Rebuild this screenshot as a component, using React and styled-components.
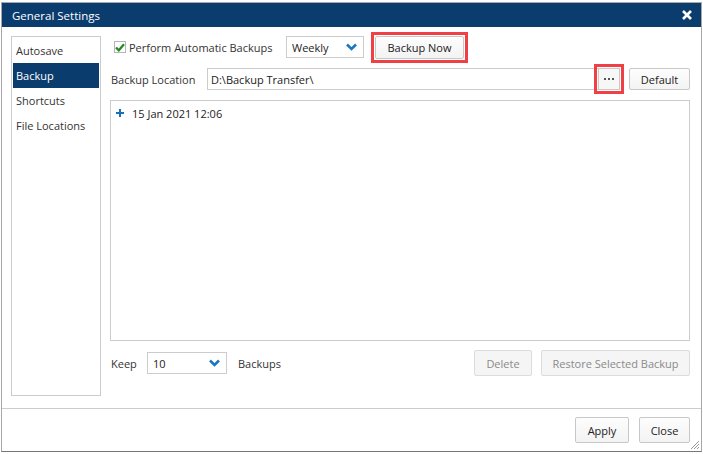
import React from "react";
import styled, { createGlobalStyle } from "styled-components";

const Global = createGlobalStyle`
  html, body { margin: 0; padding: 0; background: #fff; }
  body { font-family: "Open Sans", "Noto Sans", sans-serif; font-size: 11px; color: #333; }
  * { box-sizing: border-box; }
`;

const Win = styled.div`
  margin: 2px 0 0 1px;
  width: 701px;
  height: 450px;
  border: 1px solid #a8a8a8;
  border-bottom: 1px solid #777;
  display: flex;
  flex-direction: column;
  position: relative;
  background: #fff;
`;

const TitleBar = styled.div`
  height: 24px;
  background: #0b3c6e;
  color: #fff;
  display: flex;
  align-items: center;
  justify-content: space-between;
  padding: 0 9px 0 10px;
  font-size: 11.5px;
`;

const Body = styled.div`
  flex: 1;
  display: flex;
  gap: 9px;
  padding: 9px 11px 0 9px;
`;

const Sidebar = styled.div`
  width: 90px;
  height: 360px;
  border: 1px solid #ccc;
  padding: 1px;
  display: flex;
  flex-direction: column;
`;

const NavItem = styled.div`
  height: 25px;
  line-height: 25px;
  padding-left: 3px;
  font-size: 11px;
  white-space: nowrap;
  color: ${(p) => (p.$active ? "#fff" : "#333")};
  background: ${(p) => (p.$active ? "#0b3c6e" : "transparent")};
`;

const Main = styled.div`
  width: 580px;
  display: flex;
  flex-direction: column;
`;

const Row = styled.div`
  display: flex;
  align-items: center;
  height: ${(p) => p.$h || 22}px;
  margin-bottom: ${(p) => p.$mb || 0}px;
`;

const CheckBox = styled.span`
  width: 12px;
  height: 12px;
  flex: none;
  border: 1px solid #b5b5b5;
  background: #fff;
  margin-left: 4px;
  margin-right: 3px;
  display: inline-flex;
  align-items: center;
  justify-content: center;
`;

const Label = styled.span`
  font-size: 11px;
  color: #333;
  white-space: nowrap;
  flex: none;
  width: ${(p) => (p.$w ? p.$w + "px" : "auto")};
  margin-left: ${(p) => p.$ml || 0}px;
`;

const Select = styled.div`
  flex: none;
  width: ${(p) => p.$w}px;
  height: ${(p) => p.$h || 22}px;
  border: 1px solid #ccc;
  display: flex;
  align-items: center;
  justify-content: space-between;
  padding: 0 6px 0 5px;
  font-size: 11px;
  color: #222;
  background: #fff;
`;

const Highlight = styled.div`
  flex: none;
  display: flex;
  border: 3px solid #ef4046;
  padding: 1px;
  margin: -5px 0;
  margin-left: ${(p) => p.$ml || 0}px;
`;

const Button = styled.button`
  flex: none;
  height: ${(p) => p.$h || 24}px;
  width: ${(p) => p.$w}px;
  font-family: inherit;
  font-size: 11px;
  color: ${(p) => (p.disabled ? "#8a8a8a" : "#222")};
  background: ${(p) => (p.disabled ? "#f5f5f5" : "linear-gradient(#fdfdfd, #f3f3f3)")};
  border: 1px solid ${(p) => (p.disabled ? "#dcdcdc" : "#c8c8c8")};
  border-radius: 2px;
  padding: 0;
  margin-left: ${(p) => p.$ml || 0}px;
  display: inline-flex;
  align-items: center;
  justify-content: center;
`;

const PathInput = styled.div`
  flex: none;
  width: 413px;
  height: 22px;
  border: 1px solid #ccc;
  display: flex;
  align-items: stretch;
  font-size: 11px;
  color: #222;
`;

const PathText = styled.span`
  flex: 1;
  display: flex;
  align-items: center;
  padding-left: 3px;
`;

const DotsBtn = styled.button`
  width: 22px;
  margin: -1px -1px -1px 0;
  border: 1px solid #c8c8c8;
  background: #f7f7f7;
  padding: 0;
  display: flex;
  align-items: center;
  justify-content: center;
  gap: 2px;
  outline: 3px solid #ef4046;
  outline-offset: 1px;
`;

const Dot = styled.span`
  width: 2px;
  height: 2px;
  background: #555;
`;

const ListBox = styled.div`
  height: 241px;
  border: 1px solid #ccc;
  margin-bottom: 9px;
  padding: 3px 5px;
`;

const ListItem = styled.div`
  display: flex;
  align-items: center;
  height: 18px;
  gap: 8px;
  font-size: 11px;
  color: #222;
`;

const Spacer = styled.div`
  flex: 1;
`;

const Footer = styled.div`
  height: 43px;
  border-top: 1px solid #ccc;
  display: flex;
  align-items: center;
  justify-content: flex-end;
  gap: 10px;
  padding-right: 11px;
`;

const Grip = styled.svg`
  position: absolute;
  right: 1px;
  bottom: 1px;
`;

const Chevron = () => (
  <svg width="11" height="8" viewBox="0 0 11 8">
    <path d="M1 1.5 L5.5 6 L10 1.5" fill="none" stroke="#1a78c2" strokeWidth="2.6" />
  </svg>
);

export default function App() {
  return (
    <>
      <Global />
      <Win>
        <TitleBar>
          <span>General Settings</span>
          <svg width="10" height="10" viewBox="0 0 10 10">
            <path d="M1 1 L9 9 M9 1 L1 9" stroke="#fff" strokeWidth="2.6" />
          </svg>
        </TitleBar>
        <Body>
          <Sidebar>
            <NavItem>Autosave</NavItem>
            <NavItem $active>Backup</NavItem>
            <NavItem>Shortcuts</NavItem>
            <NavItem>File Locations</NavItem>
          </Sidebar>
          <Main>
            <Row $h={22} $mb={10}>
              <CheckBox>
                <svg width="10" height="9" viewBox="0 0 10 9">
                  <path d="M1 4.5 L3.8 7.3 L9 1.3" fill="none" stroke="#1f8a1f" strokeWidth="2.2" />
                </svg>
              </CheckBox>
              <Label $w={157}>Perform Automatic Backups</Label>
              <Select $w={78}>
                <span>Weekly</span>
                <Chevron />
              </Select>
              <Highlight $ml={7}>
                <Button $w={89} $h={23}>Backup Now</Button>
              </Highlight>
            </Row>
            <Row $h={22} $mb={10}>
              <Label $ml={1} $w={96}>Backup Location</Label>
              <PathInput>
                <PathText>D:\Backup Transfer\</PathText>
                <DotsBtn>
                  <Dot />
                  <Dot />
                  <Dot />
                </DotsBtn>
              </PathInput>
              <Button $w={61} $h={22} $ml={9}>Default</Button>
            </Row>
            <ListBox>
              <ListItem>
                <svg width="8" height="8" viewBox="0 0 8 8">
                  <path d="M4 0 V8 M0 4 H8" stroke="#1a6fb5" strokeWidth="2" />
                </svg>
                <span>15 Jan 2021 12:06</span>
              </ListItem>
            </ListBox>
            <Row $h={26}>
              <Label $ml={1} $w={36}>Keep</Label>
              <Select $w={80} $h={22}>
                <span>10</span>
                <Chevron />
              </Select>
              <Label $ml={11}>Backups</Label>
              <Spacer />
              <Button disabled $w={58} $h={26}>Delete</Button>
              <Button disabled $w={149} $h={26} $ml={9}>Restore Selected Backup</Button>
            </Row>
          </Main>
        </Body>
        <Footer>
          <Button $w={54} $h={26}>Apply</Button>
          <Button $w={51} $h={26}>Close</Button>
        </Footer>
        <Grip width="11" height="11" viewBox="0 0 11 11">
          <path d="M10 2 L2 10 M10 5 L5 10 M10 8 L8 10" stroke="#999" strokeWidth="1" />
        </Grip>
      </Win>
    </>
  );
}
